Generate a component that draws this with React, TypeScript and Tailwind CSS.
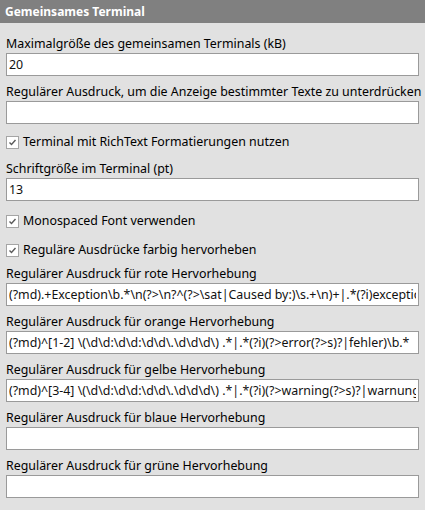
const font = "font-['Noto_Sans','Open_Sans',sans-serif]";

const rot = String.raw`(?md).+Exception\b.*\n(?>\n?^(?>\sat|Caused by:)\s.+\n)+|.*(?i)exception\b.*`;
const orange = String.raw`(?md)^[1-2] \(\d\d:\d\d:\d\d\.\d\d\d\) .*|.*(?i)(?>error(?>s)?|fehler)\b.*`;
const gelb = String.raw`(?md)^[3-4] \(\d\d:\d\d:\d\d\.\d\d\d\) .*|.*(?i)(?>warning(?>s)?|warnung(?>en)?)\b.*`;

function Field({ label, value = "", className = "" }: { label: string; value?: string; className?: string }) {
	return (
		<div className={`flex flex-col ${className}`}>
			<label className="h-[16px] leading-[16px] text-[12.4px] text-black whitespace-nowrap">{label}</label>
			<input
				readOnly
				defaultValue={value}
				className="mt-[1px] h-[23px] w-[413px] bg-white border border-[#9a9a9a] px-[2px] text-[12.4px] text-[#111] outline-none"
			/>
		</div>
	);
}

function Check({ label, className = "" }: { label: string; className?: string }) {
	return (
		<div className={`flex items-center h-[20px] ${className}`}>
			<span className="w-[13px] h-[13px] bg-white border border-[#a5a5a5] flex items-center justify-center">
				<svg width="9" height="9" viewBox="0 0 9 9">
					<path d="M1.5 4.5 L3.5 6.5 L7.5 2" fill="none" stroke="#5a5a5a" strokeWidth="1.4" />
				</svg>
			</span>
			<span className="ml-[4px] text-[12.4px] leading-[16px] text-black">{label}</span>
		</div>
	);
}

export default function App() {
	return (
		<div className={`w-[425px] h-[510px] bg-[#e1e1e1] ${font}`}>
			<div className="h-[23px] bg-[#808080] flex items-center px-[5px]">
				<span className="text-white font-bold text-[12px]">Gemeinsames Terminal</span>
			</div>
			<div className="px-[6px] flex flex-col">
				<Field className="mt-[13px]" label="Maximalgröße des gemeinsamen Terminals (kB)" value="20" />
				<Field className="mt-[8px]" label="Regulärer Ausdruck, um die Anzeige bestimmter Texte zu unterdrücken" />
				<Check className="mt-[8px]" label="Terminal mit RichText Formatierungen nutzen" />
				<Field className="mt-[9px]" label="Schriftgröße im Terminal (pt)" value="13" />
				<Check className="mt-[10px]" label="Monospaced Font verwenden" />
				<Check className="mt-[9px]" label="Reguläre Ausdrücke farbig hervorheben" />
				<Field className="mt-[6px]" label="Regulärer Ausdruck für rote Hervorhebung" value={rot} />
				<Field className="mt-[8px]" label="Regulärer Ausdruck für orange Hervorhebung" value={orange} />
				<Field className="mt-[8px]" label="Regulärer Ausdruck für gelbe Hervorhebung" value={gelb} />
				<Field className="mt-[8px]" label="Regulärer Ausdruck für blaue Hervorhebung" />
				<Field className="mt-[8px]" label="Regulärer Ausdruck für grüne Hervorhebung" />
			</div>
		</div>
	);
}
